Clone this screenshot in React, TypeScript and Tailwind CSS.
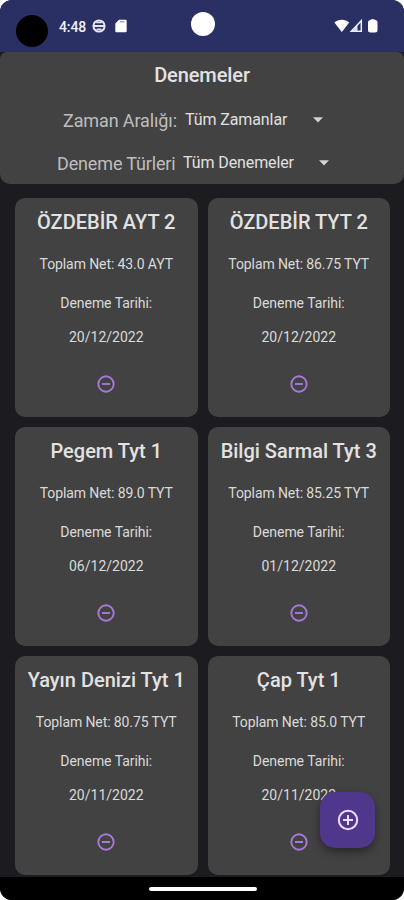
type Exam = { name: string; net: string; date: string };

const exams: Exam[] = [
  { name: "ÖZDEBİR AYT 2", net: "43.0 AYT", date: "20/12/2022" },
  { name: "ÖZDEBİR TYT 2", net: "86.75 TYT", date: "20/12/2022" },
  { name: "Pegem Tyt 1", net: "89.0 TYT", date: "06/12/2022" },
  { name: "Bilgi Sarmal Tyt 3", net: "85.25 TYT", date: "01/12/2022" },
  { name: "Yayın Denizi Tyt 1", net: "80.75 TYT", date: "20/11/2022" },
  { name: "Çap Tyt 1", net: "85.0 TYT", date: "20/11/2022" },
];

function StatusBar() {
  return (
    <div className="flex h-[52px] shrink-0 items-start bg-[#2a3064]">
      <div className="ml-4 mt-[15px] h-8 w-8 shrink-0 rounded-full bg-black" />
      <span className="ml-[11px] mt-[17px] w-[28px] whitespace-nowrap text-[14px] font-medium leading-5 tracking-[-0.1px] text-[#eff0f8]">
        4:48
      </span>
      <svg className="ml-[5px] mt-[19px] shrink-0" width="14" height="14" viewBox="0 0 14 14" fill="none" stroke="#e6e8f4">
        <circle cx="7" cy="7" r="5.600" strokeWidth="2" />
        <path d="M1.500 7h11" strokeWidth="2" />
        <path d="M4.200 3.600h5.600M4.600 10.300h4.800" strokeWidth="1.500" />
      </svg>
      <svg className="ml-[9px] mt-[19px] shrink-0" width="12" height="14" viewBox="0 0 12 14">
        <path d="M4 .8h6.500A1.200 1.200 0 0 1 11.700 2v10a1.200 1.200 0 0 1-1.200 1.200h-9A1.200 1.200 0 0 1 .3 12V4.500z" fill="#fff" />
        <path d="M5 2.800h4.500" stroke="#777c9d" />
      </svg>
      <div className="ml-[64px] mt-3 h-6 w-6 shrink-0 rounded-full bg-white" />
      <svg className="ml-[119px] mt-[19px] shrink-0" width="46" height="14" viewBox="0 0 46 14">
        <path d="M.4 3.500C4.500-.2 11-.2 15.200 3.500L7.800 13z" fill="#fff" />
        <path d="M17.300 12.200 27.300 1.700V12.200z" fill="none" stroke="#f0f1fa" strokeWidth="1.500" />
        <path d="M23.500 5.500v7h-5z" fill="#dfe2f4" />
        <rect x="34" y="1" width="9.500" height="12.500" rx="2.500" fill="#fff" />
        <rect x="36.500" y=".3" width="4.500" height="3" rx="1" fill="#fff" />
      </svg>
    </div>
  );
}

function Caret() {
  return (
    <svg className="shrink-0" width="10" height="6" viewBox="0 0 10 6">
      <path d="M0 .3h10L5 5.500z" fill="#d2d2d2" />
    </svg>
  );
}

function Filters() {
  return (
    <header className="flex h-[132px] shrink-0 flex-col rounded-b-[10px] rounded-t-[7px] bg-[#424242]">
      <h1 className="mt-[11px] text-center text-[20px] font-medium leading-6 tracking-[-0.1px] text-[#e2e2e2]">Denemeler</h1>
      <div className="mt-[21px] flex h-6 items-center whitespace-nowrap pl-[63px]">
        <span className="w-[122px] text-[18px] tracking-[-0.120px] text-[#bebebe]">Zaman Aralığı:</span>
        <span className="w-[128px] text-[16px] tracking-[-0.1px] text-[#e0e0e0]">Tüm Zamanlar</span>
        <Caret />
      </div>
      <div className="mt-[19px] flex h-6 items-center whitespace-nowrap pl-[57px]">
        <span className="w-[126px] text-[18px] tracking-[-0.150px] text-[#bebebe]">Deneme Türleri</span>
        <span className="w-[136px] text-[16px] tracking-[-0.1px] text-[#e0e0e0]">Tüm Denemeler</span>
        <Caret />
      </div>
    </header>
  );
}

function ExamCard({ exam }: { exam: Exam }) {
  return (
    <article className="flex flex-col items-center whitespace-nowrap rounded-[10px] bg-[#424242] text-[14px] leading-5 text-[#dadada]">
      <h2 className="mt-3 text-[20px] font-medium leading-6 text-[#e2e2e2]">{exam.name}</h2>
      <p className="mt-[20px] tracking-[-0.1px]">Toplam Net: {exam.net}</p>
      <p className="mt-[19px] tracking-[-0.050px]">Deneme Tarihi:</p>
      <p className="mt-[14px]">{exam.date}</p>
      <button aria-label="Sil" className="mt-[28px]">
        <svg width="18" height="18" viewBox="0 0 18 18" fill="none" stroke="#a879d8" strokeWidth="1.900">
          <circle cx="9" cy="9" r="7.700" />
          <path d="M5 9h8" />
        </svg>
      </button>
    </article>
  );
}

export default function App() {
  return (
    <div className="h-[900px] w-[404px] bg-white font-[Roboto,sans-serif]">
      <div className="relative flex h-[900px] flex-col overflow-hidden rounded-[12px] bg-[#1c1b20]">
        <StatusBar />
        <Filters />
        <main className="mt-[14px] grid h-[677px] shrink-0 grid-cols-2 grid-rows-3 gap-[10px] pl-[15px] pr-[14px]">
          {exams.map((exam) => (
            <ExamCard key={exam.name} exam={exam} />
          ))}
        </main>
        <footer className="mt-[2px] flex flex-1 items-center justify-center bg-black">
          <div className="ml-[2px] h-1 w-[108px] rounded-full bg-white" />
        </footer>
        <button
          aria-label="Ekle"
          className="absolute left-[320px] top-[792px] flex h-[56px] w-[55px] items-center justify-center rounded-[15px] bg-[#4f378b] shadow-[0_4px_8px_rgba(0,0,0,0.4)]"
        >
          <svg width="22" height="22" viewBox="0 0 22 22" fill="none" stroke="#eaddff" strokeWidth="2">
            <circle cx="11" cy="11" r="9.200" />
            <path d="M6 11h10M11 6v10" />
          </svg>
        </button>
      </div>
    </div>
  );
}
